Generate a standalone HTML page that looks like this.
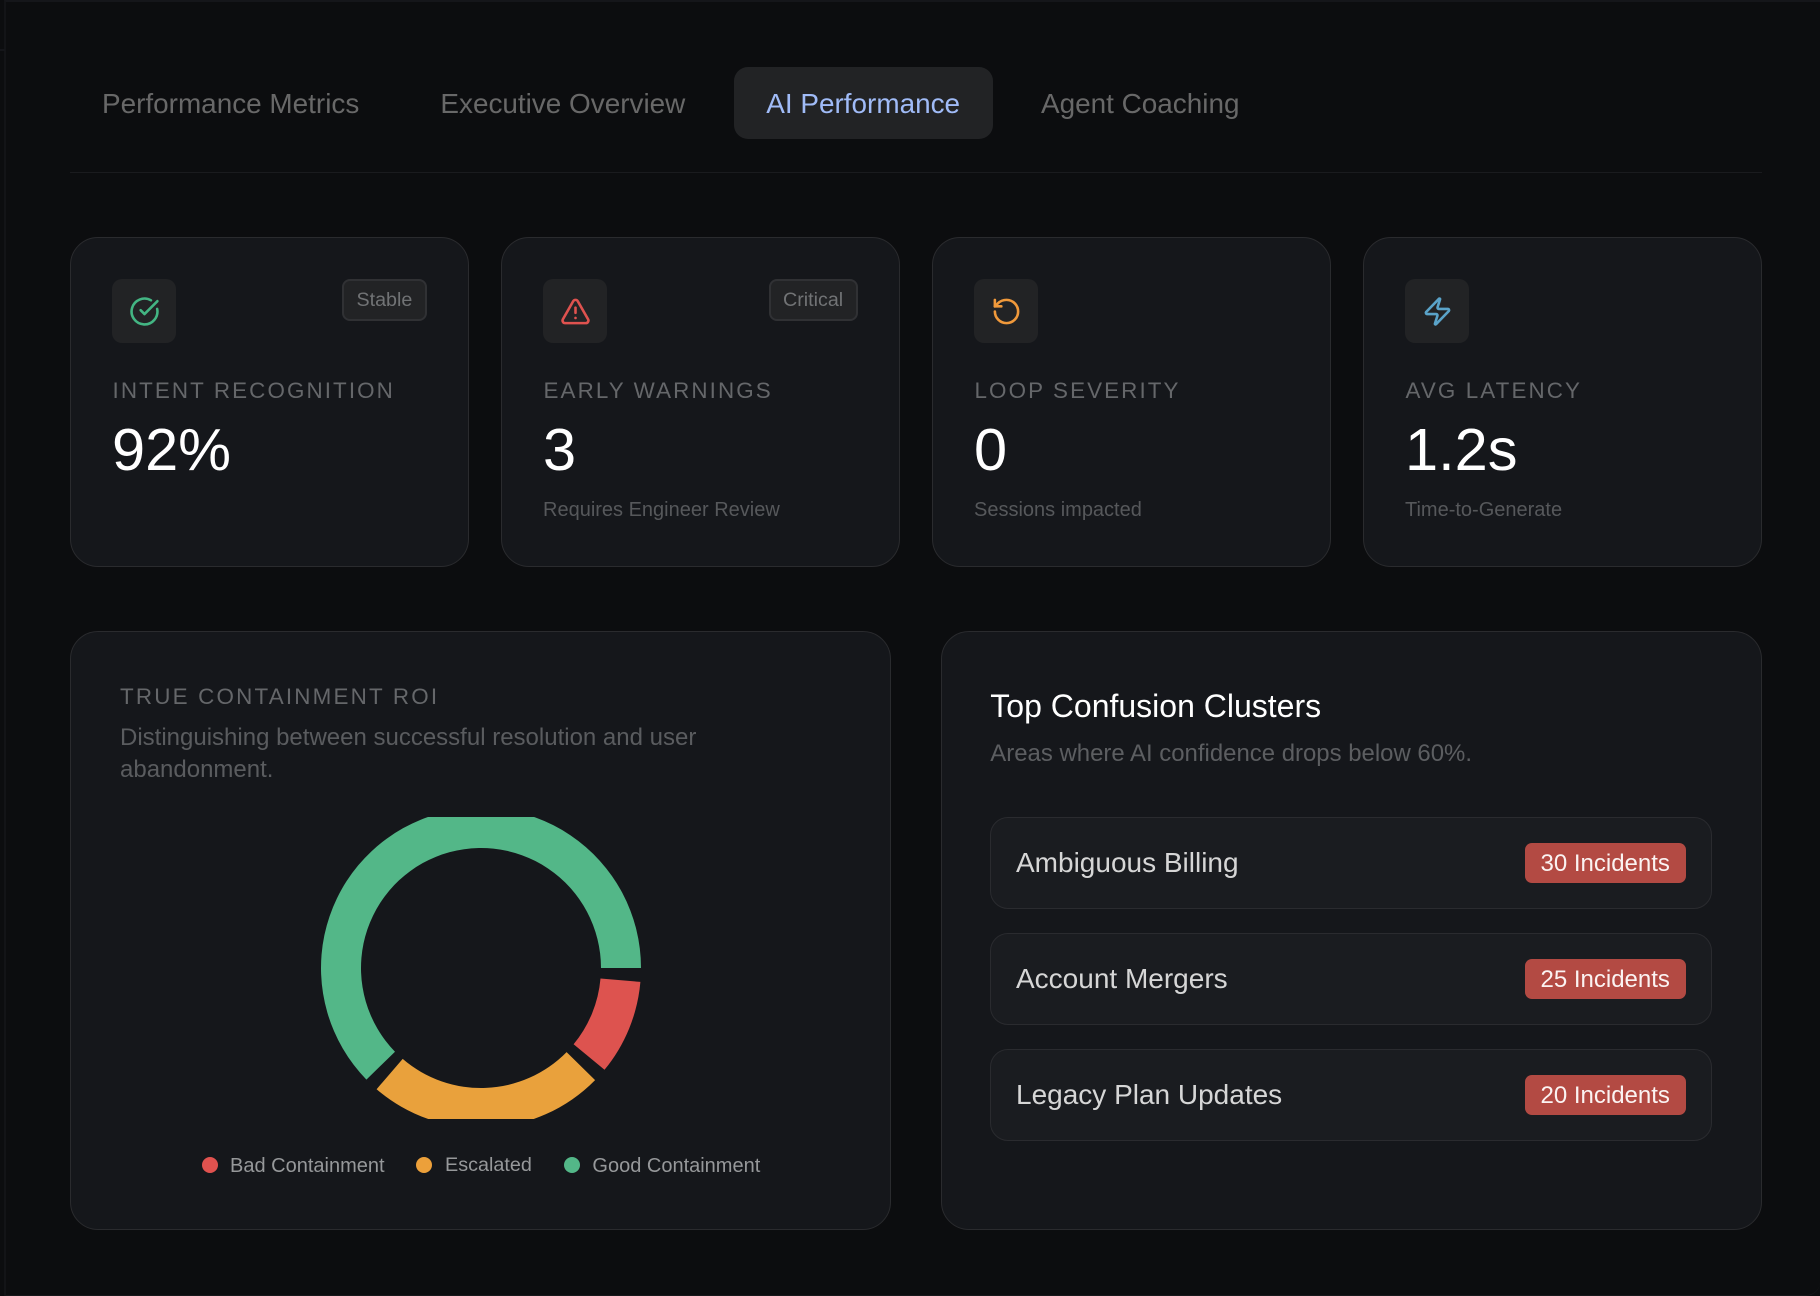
<!DOCTYPE html>
<html lang="en">
<head>
<meta charset="utf-8">
<title>AI Performance</title>
<style>
html,body{margin:0;padding:0;background:#0c0d0f;}
body{position:relative;width:1820px;height:1296px;overflow:hidden;font-family:"Liberation Sans",Arial,sans-serif;}
.frame{position:absolute;left:4px;top:0;width:1816px;height:1296px;box-sizing:border-box;border-left:2px solid #131417;border-top:2px solid #15161a;border-bottom:1px solid #17181b;border-right:0;border-bottom-right-radius:14px;}
.tick{position:absolute;left:0;top:49px;width:5px;height:2px;background:#15161a;}
.t{position:absolute;line-height:1;white-space:nowrap;}
.tabbg{position:absolute;left:734px;top:67px;width:259px;height:72px;border-radius:14px;background:#222325;}
.tab{font-size:27.9px;top:90px;color:#686868;}
.rule{position:absolute;left:70px;top:171.5px;width:1692px;height:1px;background:#1a1b1e;}
.card{position:absolute;top:237px;width:398.33px;height:329.5px;box-sizing:border-box;background:#15171b;border:1px solid #2a2b2e;border-radius:28px;}
.ibox{position:absolute;top:279px;width:64px;height:64px;border-radius:10px;background:#222325;}
.ibox svg{position:absolute;left:16.5px;top:16.5px;width:31px;height:31px;fill:none;stroke-width:2;stroke-linecap:round;stroke-linejoin:round;}
.pill{position:absolute;top:279px;height:42px;box-sizing:border-box;background:#222325;border:2px solid #303134;border-radius:8px;}
.pilltx{font-size:19.7px;top:291.3px;color:#717375;}
.lab{font-size:22.4px;letter-spacing:2.1px;top:379.5px;color:#65676a;}
.val{font-size:59.5px;top:419.6px;color:#fff;}
.sub{font-size:20px;top:500px;color:#56585b;}
.panel{position:absolute;top:631px;width:821.17px;height:599px;box-sizing:border-box;background:#15171b;border:1px solid #2a2b2e;border-radius:28px;}
.desc{font-size:24px;color:#5a5c5f;}
.leg{font-size:20px;top:1156px;color:#96989a;}
.dot{position:absolute;top:1157px;width:16px;height:16px;border-radius:50%;}
.item{position:absolute;left:990.3px;width:721.4px;height:91.5px;box-sizing:border-box;background:#1a1c20;border:1px solid #2a2b2f;border-radius:18px;}
.itx{font-size:28px;left:1016px;color:#d6d6d6;}
.inc{position:absolute;left:1525px;width:161px;height:40px;background:#b34a43;border-radius:7px;}
.intx{font-size:24px;left:1540.5px;color:#fbf3f2;}
svg.d{position:absolute;left:0;top:0;width:1820px;height:1296px;}
</style>
</head>
<body>
<div class="frame"></div>
<div class="tick"></div>

<div class="tabbg"></div>
<div class="t tab" style="left:102px">Performance Metrics</div>
<div class="t tab" style="left:440.4px">Executive Overview</div>
<div class="t tab" style="left:766.3px;color:#a0bbf7">AI Performance</div>
<div class="t tab" style="left:1041px">Agent Coaching</div>
<div class="rule"></div>

<div class="card" style="left:70.33px"></div>
<div class="card" style="left:501.33px"></div>
<div class="card" style="left:932.33px"></div>
<div class="card" style="left:1363.33px"></div>

<div class="ibox" style="left:112px"><svg viewBox="0 0 24 24" stroke="#43b583"><path d="M21.801 10A10 10 0 1 1 17 3.335"/><path d="m9 11 3 3L22 4"/></svg></div>
<div class="pill" style="left:342px;width:85px"></div>
<div class="t pilltx" style="left:356.5px">Stable</div>
<div class="t lab" style="left:112.5px">INTENT RECOGNITION</div>
<div class="t val" style="left:112px">92%</div>

<div class="ibox" style="left:543px"><svg viewBox="0 0 24 24" stroke="#df524f"><path d="m21.73 18-8-14a2 2 0 0 0-3.48 0l-8 14A2 2 0 0 0 4 21h16a2 2 0 0 0 1.73-3"/><path d="M12 9v4"/><path d="M12 17h.01"/></svg></div>
<div class="pill" style="left:769.3px;width:88.4px"></div>
<div class="t pilltx" style="left:783px">Critical</div>
<div class="t lab" style="left:543.5px">EARLY WARNINGS</div>
<div class="t val" style="left:543px">3</div>
<div class="t sub" style="left:543px">Requires Engineer Review</div>

<div class="ibox" style="left:974px"><svg viewBox="0 0 24 24" stroke="#f0993b"><path d="M3 12a9 9 0 1 0 9-9 9.75 9.75 0 0 0-6.74 2.74L3 8"/><path d="M3 3v5h5"/></svg></div>
<div class="t lab" style="left:974.5px">LOOP SEVERITY</div>
<div class="t val" style="left:974px">0</div>
<div class="t sub" style="left:974px">Sessions impacted</div>

<div class="ibox" style="left:1405px"><svg viewBox="0 0 24 24" stroke="#5aa3c9"><path d="M4 14a1 1 0 0 1-.78-1.63l9.9-10.2a.5.5 0 0 1 .86.46l-1.92 6.02A1 1 0 0 0 13 10h7a1 1 0 0 1 .78 1.63l-9.9 10.2a.5.5 0 0 1-.86-.46l1.92-6.02A1 1 0 0 0 11 14z"/></svg></div>
<div class="t lab" style="left:1405.5px">AVG LATENCY</div>
<div class="t val" style="left:1405px">1.2s</div>
<div class="t sub" style="left:1405px">Time-to-Generate</div>

<div class="panel" style="left:70.33px"></div>
<div class="t lab" style="left:120px;top:686px;letter-spacing:2.2px">TRUE CONTAINMENT ROI</div>
<div class="t desc" style="left:120px;top:725.5px">Distinguishing between successful resolution and user</div>
<div class="t desc" style="left:120px;top:758px">abandonment.</div>

<svg class="d" viewBox="0 0 1820 1296">
<defs><clipPath id="c"><rect x="300" y="817" width="360" height="302"/></clipPath></defs>
<g clip-path="url(#c)">
<path fill="#53b788" d="M641 968A160 160 0 1 0 366.4 1079.6L395 1051.7A120 120 0 1 1 601 968Z"/>
<path fill="#dd534f" d="M640.4 981.9A160 160 0 0 1 604.5 1069.8L573.6 1044.3A120 120 0 0 0 600.5 978.5Z"/>
<path fill="#e9a13c" d="M595.1 1080.1A160 160 0 0 1 376.6 1089.2L402.7 1058.9A120 120 0 0 0 566.6 1052.1Z"/>
</g>
</svg>

<div class="dot" style="left:202px;background:#e0524f"></div>
<div class="t leg" style="left:230px">Bad Containment</div>
<div class="dot" style="left:416px;background:#eca03a"></div>
<div class="t leg" style="left:445px;font-size:19.8px;top:1156.4px">Escalated</div>
<div class="dot" style="left:564px;background:#53b788"></div>
<div class="t leg" style="left:592.4px">Good Containment</div>

<div class="panel" style="left:940.5px"></div>
<div class="t" style="left:990.3px;top:690px;font-size:32px;color:#fff">Top Confusion Clusters</div>
<div class="t" style="left:990.3px;top:742px;font-size:23.95px;color:#5c5e61">Areas where AI confidence drops below 60%.</div>

<div class="item" style="top:817.3px"></div>
<div class="t itx" style="top:849.3px">Ambiguous Billing</div>
<div class="inc" style="top:843px"></div>
<div class="t intx" style="top:852px">30 Incidents</div>

<div class="item" style="top:933.3px"></div>
<div class="t itx" style="top:965.3px">Account Mergers</div>
<div class="inc" style="top:959px"></div>
<div class="t intx" style="top:968px">25 Incidents</div>

<div class="item" style="top:1049.3px"></div>
<div class="t itx" style="top:1081.3px">Legacy Plan Updates</div>
<div class="inc" style="top:1075px"></div>
<div class="t intx" style="top:1084px">20 Incidents</div>
</body>
</html>
